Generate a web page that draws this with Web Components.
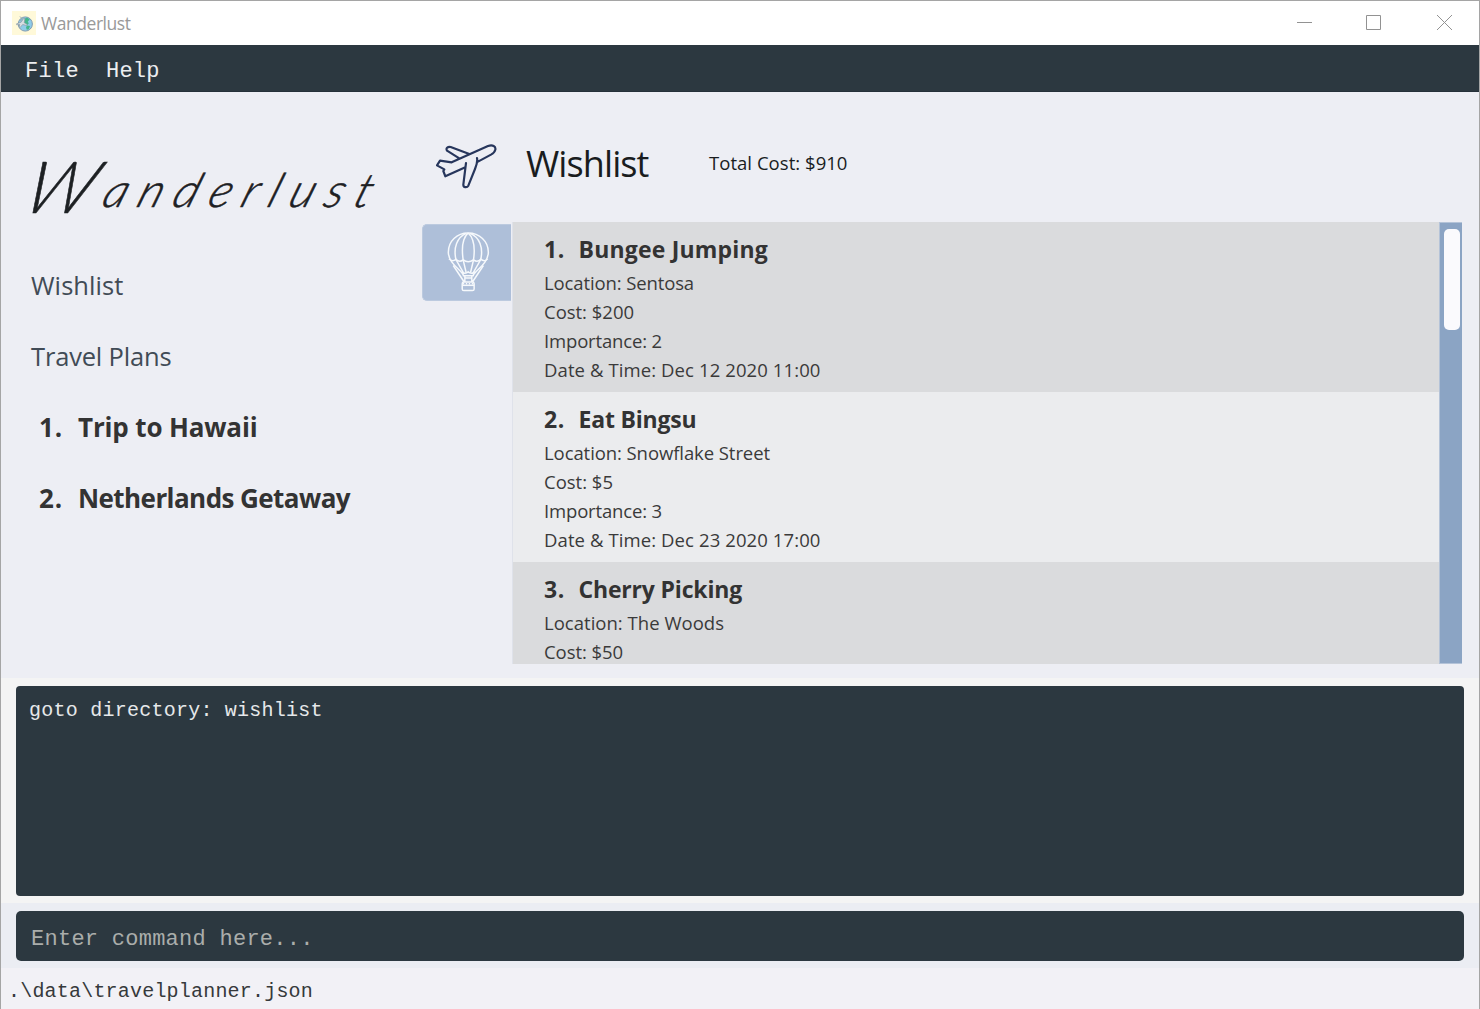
<!DOCTYPE html>
<html lang="en">
<head>
<meta charset="utf-8">
<title>Wanderlust</title>
<style>
html,body{margin:0;height:100%;overflow:hidden}
body{font-family:"Open Sans","Noto Sans",sans-serif}
</style>
</head>
<body>
<wl-window></wl-window>
<script>
const define = (name, html, setup) => {
  const tpl = document.createElement('template');
  tpl.innerHTML = html;
  customElements.define(name, class extends HTMLElement {
    connectedCallback() {
      if (this.shadowRoot) return;
      this.attachShadow({mode: 'open'}).append(tpl.content.cloneNode(true));
      if (setup) setup(this, this.shadowRoot);
    }
  });
};

/* Text tracked so that its line is exactly w pixels wide */
define('fit-text', `<style>:host{display:inline-block;white-space:pre}span{display:inline-block}</style><span><slot></slot></span>`,
  (el, root) => {
    const w = parseFloat(el.getAttribute('w'));
    const natural = parseFloat(getComputedStyle(root.querySelector('span')).width);
    el.style.letterSpacing = ((w - natural) / el.textContent.length) + 'px';
  });

define('title-bar', `<style>
:host{display:flex;height:44px;background:#fff;align-items:center;color:#999;font-size:17.5px}
.app{width:24px;height:24px;margin:-1px 5px 0 11px;flex:none}
.name{flex:1;line-height:44px;padding-bottom:1px}
.controls{width:155px;height:15px;margin:-1px 27px 0 0;flex:none}
</style>
<svg class="app" viewBox="0 0 24 24"><rect width="24" height="24" fill="#fff9d9"/>
<circle cx="13.3" cy="13" r="7.1" fill="#8fcbe8" stroke="#7994ab" stroke-width=".9"/>
<path d="M11 8.5l4-2 2.8 2-2 2 1 2-2.2 2-1-2.3-2.5-.6zM15 14.500l3 .5-1.2 3.2-2 .6-.8-2.2z" fill="#42b58c"/>
<path d="M4.500 12.800l4.600-1.600 2.600-3.800 1.200.3-.7 4 3 1.800-.5 1-4-1-2.600 3-1-.3.6-2.700-3 .3z" fill="#d9dfe2" stroke="#899aa5" stroke-width=".7"/><path d="M8 5.500l2.500 2.500-2.300 2" fill="none" stroke="#96a6ad"/></svg>
<div class="name"><fit-text w="89.500">Wanderlust</fit-text></div>
<svg class="controls" viewBox="0 0 155 15" fill="none" stroke="#929292"><path d="M0 7.500H15M140 0l15 15M155 0l-15 15"/><path d="M69.500 .5h14v14h-14z"/></svg>`);

define('menu-bar', `<style>
:host{display:flex;box-sizing:border-box;height:47px;background:#2c3840;border-bottom:1px solid #253039;padding:5px 0 0 24px;gap:27px;color:#eceef0;font:22px/43px "Liberation Mono",monospace}
</style><fit-text w="53.9">File</fit-text><fit-text w="53.9">Help</fit-text>`);

define('side-nav', `<style>
:host{display:block;box-sizing:border-box;width:421px;flex:none;padding-left:30px}
.logo{box-sizing:border-box;height:158px;padding-top:62px;font:italic 300 47px/60px Lato,sans-serif;color:#1d2023}
.logo fit-text{transform:skewX(-20deg);transform-origin:0 100%;margin-left:-14px;-webkit-text-stroke:.6px #1d2023}
.logo .w{font-size:72px;line-height:50px;position:relative;top:6px}
.link{height:71px;line-height:71px;font-size:25.500px;color:#414b56}
.trip{height:71px;line-height:71px;font-size:26px;font-weight:700;color:#333;display:flex}
.num{width:39px;padding-left:8px}
</style>
<div class="logo"><fit-text w="357"><span class="w">W</span>anderlust</fit-text></div>
<div class="link"><fit-text w="92.500">Wishlist</fit-text></div>
<div class="link"><fit-text w="140.500">Travel Plans</fit-text></div>
<div class="trip"><div class="num"><fit-text w="24">1.</fit-text></div><fit-text w="179.500">Trip to Hawaii</fit-text></div>
<div class="trip"><div class="num"><fit-text w="24">2.</fit-text></div><fit-text w="272">Netherlands Getaway</fit-text></div>`);

define('page-head', `<style>
:host{display:flex;height:130px;color:#191c1e}
.plane{width:61px;height:45px;margin:52px 29px 0 14px;flex:none}
.h{font-size:36px;line-height:46px;margin-top:49px;width:183px}
.c{font-size:18.5px;line-height:40px;margin-top:51px}
</style>
<svg class="plane" viewBox="48 42 183 135" fill="none" stroke="#27365c" stroke-width="6.500" stroke-linecap="round" stroke-linejoin="round">
<path d="M95 97L60 92 51 106 73 118 70 123 76 139 136 112M95 97L204 48C218 43 228 49 226 59 225 66 220 70 213 74L174 95M148 72L92 51C82 50 77 55 81 62L118 85M138 99L130 164C130 173 141 174 145 167L165 117C170 105 173 93 171 84"/></svg>
<div class="h"><fit-text w="122.500">Wishlist</fit-text></div>
<div class="c"><fit-text w="138.500">Total Cost: $910</fit-text></div>`);

define('balloon-tab', `<style>
:host{display:flex;box-sizing:border-box;width:89px;height:77px;margin:2px 1px 0 0;flex:none;background:#aebfd9;border-radius:5px 0 0 5px;border:1px solid #bccadf;border-right:0}
svg{width:43px;height:61px;margin:6px 0 0 23.500px}
</style>
<svg viewBox="50 16 130 184" fill="none" stroke="#f6f9fc" stroke-width="4.500">
<path d="M100 151C96 134 55 117 54 80 54 46 80 22 114 22S175 46 175 80C174 117 134 134 129 151z"/>
<path d="M114 22C94 40 94 70 99 104L108 142M114 22C134 40 135 70 130 104L121 142M108 23C80 35 69 66 77 102L102 146M120 23C149 35 160 66 152 102L127 146"/>
<path d="M56 100Q66 111 77 101 87 112 99 103 114 114 130 103 142 112 152 101 164 111 173 100"/>
<path d="M69 120L102 170M160 120L127 170M94 139Q104 148 114 139 124 148 135 139M104 151V170M125 151V170M104 158H125"/>
<rect x="96" y="170" width="36" height="26" rx="5"/><path d="M96 180H132"/><path d="M98 175H131" stroke-dasharray="4 5"/></svg>`);

define('wish-item', `<style>
:host{display:block;box-sizing:border-box;height:170px;padding:10px 0 0 31px;background:#ebecee;color:#3a3a3a;flex:none}
:host([odd]){background:#dadbdd}
.t{display:flex;height:34px;line-height:34px;margin-bottom:2px;font-size:23px;font-weight:700;color:#333}
.n{width:34.500px}
.l{height:29px;line-height:29px;font-size:18.5px}
</style><div class="t"><div class="n"></div></div>`,
  (el, root) => {
    const t = root.querySelector('.t'), fit = (text, w) => {
      const f = document.createElement('fit-text');
      f.setAttribute('w', w); f.textContent = text; return f;
    };
    root.querySelector('.n').append(fit(el.getAttribute('n') + '.', 21));
    const [name, ...lines] = JSON.parse(el.getAttribute('data'));
    t.append(fit(...name));
    for (const line of lines) {
      const d = document.createElement('div');
      d.className = 'l'; root.append(d); d.append(fit(...line));
    }
  });

define('wish-list', `<style>
:host{display:flex;flex:1;box-sizing:border-box;height:442px;border-left:1px solid #dfe2ea;overflow:hidden}
.items{flex:1;display:flex;flex-direction:column;overflow:hidden}
.bar{box-sizing:border-box;width:23px;background:#8ba4c4;border:1px solid #b4c3d8;border-right:0;padding:6px 2px 0 4px}
.thumb{height:101px;background:#fafafd;border-radius:5px}
</style>
<div class="items">
<wish-item odd n="1" data='[["Bungee Jumping",189.5],["Location: Sentosa",150],["Cost: $200",90],["Importance: 2",118],["Date &amp; Time: Dec 12 2020 11:00",276.5]]'></wish-item>
<wish-item n="2" data='[["Eat Bingsu",118],["Location: Snowflake Street",226],["Cost: $5",69],["Importance: 3",118],["Date &amp; Time: Dec 23 2020 17:00",276.5]]'></wish-item>
<wish-item odd n="3" data='[["Cherry Picking",163.5],["Location: The Woods",180],["Cost: $50",79]]'></wish-item>
</div><div class="bar"><div class="thumb"></div></div>`);

define('result-box', `<style>
:host{display:block;box-sizing:border-box;height:225px;background:#f4f4f4;padding:8px 15px 7px}
.b{box-sizing:border-box;height:210px;background:#2c3840;border-radius:4px;padding:10px 13px;color:#e6e8ea;font:20px/30px "Liberation Mono",monospace}
</style><div class="b"><fit-text w="293.8">goto directory: wishlist</fit-text></div>`);

define('command-box', `<style>
:host{display:block;box-sizing:border-box;height:65px;background:#ebedf3;padding:8px 15px 7px}
.b{box-sizing:border-box;height:50px;background:#2c3840;border-radius:5px;padding:7px 15px 0;color:#aaadab;font:22px/44px "Liberation Mono",monospace}
</style><div class="b"><fit-text w="282.7">Enter command here...</fit-text></div>`);

define('status-bar', `<style>
:host{display:block;box-sizing:border-box;height:41px;background:#f2f1f6;padding:3px 0 0 7px;color:#36393b;font:20px/41px "Liberation Mono",monospace}
</style><fit-text w="305">.\\data\\travelplanner.json</fit-text>`);

define('wl-window', `<style>
:host{display:flex;flex-direction:column;box-sizing:border-box;width:1480px;height:1009px;border:1px solid #a5a5a5;border-bottom:0;overflow:hidden;background:#edeef4}
.main{display:flex;height:586px;flex:none}
.right{flex:1}
.row{display:flex;align-items:flex-start;padding-right:17px}
</style>
<title-bar></title-bar><menu-bar></menu-bar>
<div class="main"><side-nav></side-nav><div class="right"><page-head></page-head>
<div class="row"><balloon-tab></balloon-tab><wish-list></wish-list></div></div></div>
<result-box></result-box><command-box></command-box><status-bar></status-bar>`);
</script>
</body>
</html>
